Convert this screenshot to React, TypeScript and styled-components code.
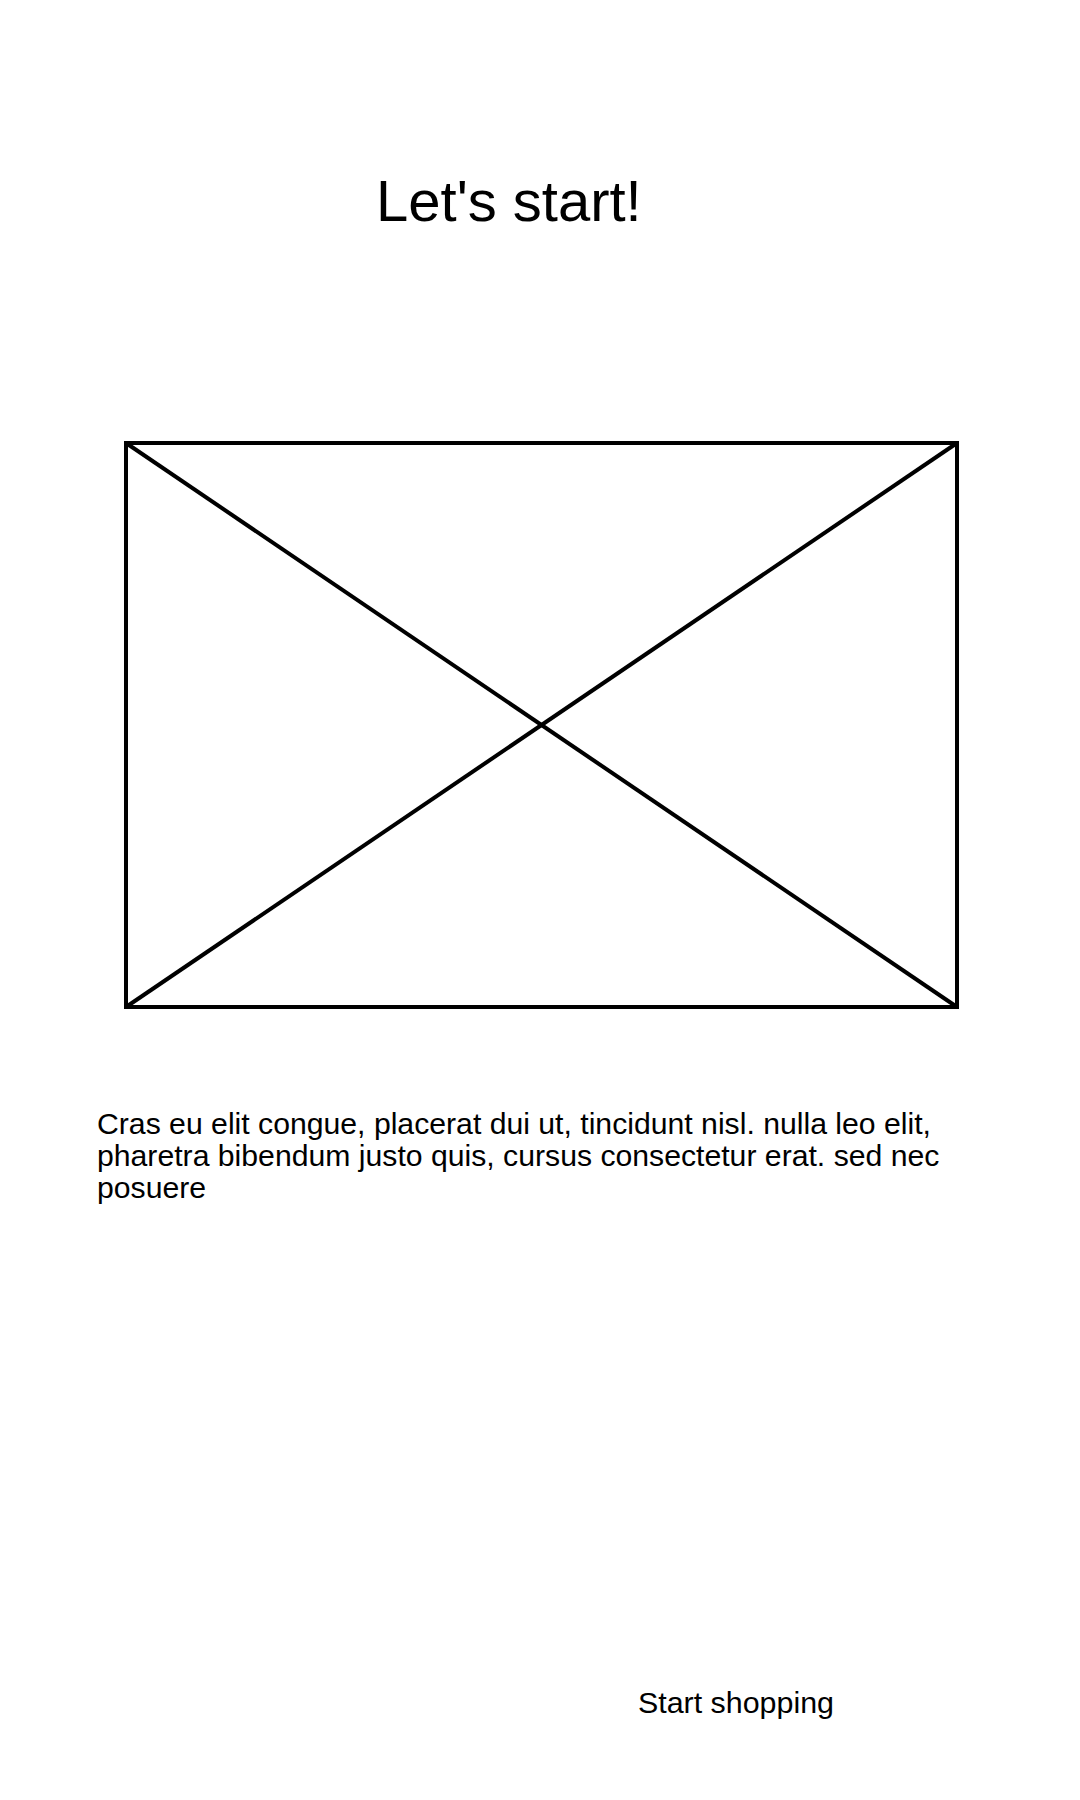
import React from "react";
import styled, { createGlobalStyle } from "styled-components";

const GlobalStyle = createGlobalStyle`
  html, body {
    margin: 0;
    padding: 0;
    background: #ffffff;
  }
  body {
    font-family: "Liberation Sans", Arial, sans-serif;
    color: #000000;
  }
`;

const Page = styled.main`
  width: 1080px;
  min-height: 1800px;
  display: flex;
  flex-direction: column;
  align-items: flex-start;
  padding-top: 169px;
  box-sizing: border-box;
`;

const Title = styled.h1`
  margin: 0 0 0 376px;
  font-size: 58px;
  line-height: 64px;
  font-weight: 400;
`;

const Placeholder = styled.svg`
  display: block;
  margin: 208px 0 0 124px;
`;

const Body = styled.p`
  margin: 99px 0 0 97px;
  width: 880px;
  font-size: 30.2px;
  line-height: 32px;
`;

const StartButton = styled.button`
  margin: 481px 0 0 638px;
  padding: 0;
  border: none;
  background: transparent;
  font-family: "Liberation Sans", Arial, sans-serif;
  font-size: 30.4px;
  line-height: 34px;
  color: #000000;
  cursor: pointer;
`;

const W = 835;
const H = 568;
const S = 4;

export default function App() {
  return (
    <>
      <GlobalStyle />
      <Page>
        <Title>Let's start!</Title>
        <Placeholder width={W} height={H} viewBox={`0 0 ${W} ${H}`}>
          <rect
            x={S / 2}
            y={S / 2}
            width={W - S}
            height={H - S}
            fill="none"
            stroke="#000"
            strokeWidth={S}
          />
          <line x1={S / 2} y1={S / 2} x2={W - S / 2} y2={H - S / 2} stroke="#000" strokeWidth={S} />
          <line x1={W - S / 2} y1={S / 2} x2={S / 2} y2={H - S / 2} stroke="#000" strokeWidth={S} />
        </Placeholder>
        <Body>
          Cras eu elit congue, placerat dui ut, tincidunt nisl. nulla leo elit, pharetra bibendum justo
          quis, cursus consectetur erat. sed nec posuere
        </Body>
        <StartButton type="button">Start shopping</StartButton>
      </Page>
    </>
  );
}
